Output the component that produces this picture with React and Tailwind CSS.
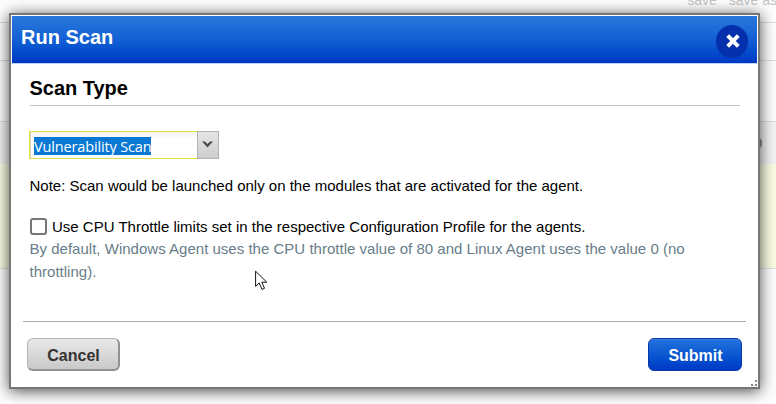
function Backdrop() {
  return (
    <div className="flex h-[404px] flex-col bg-[#fdfdfd] text-[#c4c4c4]">
      <div className="flex h-[23px] items-start justify-end gap-3 border-b border-[#dedede] text-[14px] leading-[16px] whitespace-nowrap">
        <span className="-mt-[8px]">save</span>
        <span className="-mt-[8px] -mr-px">save as</span>
      </div>
      <div className="h-[38px] border-b border-[#dedede]" />
      <div className="h-[61px] border-b border-[#dedede]" />
      <div className="flex h-[42px] items-center justify-end bg-[#f2f2f3] pr-[14px]">
        <div className="h-[10px] w-[4px] rounded-r bg-[#8f9699]" />
      </div>
      <div className="h-[105px] border-b border-[#dedede] bg-[#fafce3]" />
    </div>
  );
}

function CloseButton() {
  return (
    <button aria-label="Close" className="mt-[9px] mr-[9px] flex h-[33px] w-[32px] items-center justify-center rounded-full bg-[#0430ad]">
      <svg width="14" height="14" viewBox="0 0 14 14" className="-mt-px ml-px" fill="none" stroke="white" strokeWidth="4">
        <path d="M1.7 1.7 12.3 12.3M12.3 1.7 1.7 12.3" />
      </svg>
    </button>
  );
}

export default function App() {
  return (
    <div className="relative h-[404px] w-[776px] overflow-hidden font-['Liberation_Sans',Arial,sans-serif]">
      <Backdrop />
      <div className="absolute top-[13px] left-[9px] flex h-[376px] w-[751px] flex-col border-2 border-[#747877] bg-white shadow-[0_2px_14px_0_rgba(0,0,0,0.7)]">
        <header className="m-px mb-0 flex h-[48px] justify-between border-b border-[#bcd4fa] bg-linear-to-b from-[#2a78dc] via-[#1260d4] to-[#0038c4]">
          <h1 className="pt-[9px] pl-[9px] text-[20px] leading-6 font-bold text-white">Run Scan</h1>
          <CloseButton />
        </header>
        <main className="flex h-[257px] flex-col pr-[18px] pl-[18.5px]">
          <h2 className="h-[42px] border-b border-[#c4c4c4] pt-[12px] text-[20px] leading-6 font-bold tracking-[-0.03px] text-black">Scan Type</h2>
          <div className="-ml-[0.5px] mt-[25px] flex h-[28px] w-[190px]">
            <div className="flex flex-1 items-center border border-r-0 border-[#dfe03a] bg-linear-to-b from-[#f1f1f1] to-white to-30% pl-[4px] shadow-[inset_1px_0_0_#d5d5c0]">
              <span className="mt-[2px] h-[18px] w-[117px] bg-[#0878d3] font-['Open_Sans','Noto_Sans',sans-serif] text-[14.5px] leading-[19px] tracking-[-0.15px] whitespace-nowrap text-white">Vulnerability Scan</span>
            </div>
            <div className="flex w-[22px] items-center justify-center border border-[#aeb3b7] bg-linear-to-b from-[#e6e6e6] to-[#cdcdcd]">
              <svg width="11" height="7" viewBox="0 0 11 7" className="-mt-[2px] -ml-px">
                <path d="M0 .5H3L5.5 3 8 .5H11L5.5 6.5Z" fill="#4c4c4c" />
              </svg>
            </div>
          </div>
          <p className="mt-[16px] text-[15px] leading-[22px] text-black">Note: Scan would be launched only on the modules that are activated for the agent.</p>
          <label className="mt-[18px] flex h-[22px] items-center text-[15px] leading-[22px] text-black">
            <span className="mr-[5.5px] h-[17px] w-[17px] rounded-[3px] border-2 border-[#767676] bg-white" />
            <span className="pt-px">Use CPU Throttle limits set in the respective Configuration Profile for the agents.</span>
          </label>
          <p className="text-[15px] leading-[23px] tracking-[0.015px] text-[#687d89]">
            By default, Windows Agent uses the CPU throttle value of 80 and Linux Agent uses the value 0 (no<br />throttling).
          </p>
        </main>
        <footer className="mr-[12px] ml-[12px] flex justify-between border-t border-[#adadad] pt-[16px] pr-[4px] pl-[4px]">
          <button className="h-[33px] w-[93px] rounded-[6px] border border-[#b4b4b4] border-r-2 border-b-2 border-r-[#929292] border-b-[#929292] bg-linear-to-b from-[#e9e9e9] to-[#c9c9c9] pt-[3px] pl-px text-[16px] font-bold text-[#333]">Cancel</button>
          <button className="h-[33px] w-[94px] rounded-[6px] border border-[#0a36a6] bg-linear-to-b from-[#2273dd] to-[#0038c6] pt-[2px] pl-px text-[16px] font-bold text-white shadow-[inset_0_1px_0_#3c80e0]">Submit</button>
        </footer>
        <svg className="absolute right-0 bottom-0" width="8" height="8" viewBox="0 0 8 8" fill="#888">
          <path d="M5 1h2v2H5zM5 5h2v2H5zM1 5h2v2H1z" />
        </svg>
      </div>
      <svg className="absolute top-[270px] left-[255px]" width="13" height="21" viewBox="0 0 13 21">
        <path d="M.6 1.2V16.4L4.2 13 7 19.4 9.5 18.3 6.8 12.2H11.8Z" fill="white" stroke="#111" />
      </svg>
    </div>
  );
}
